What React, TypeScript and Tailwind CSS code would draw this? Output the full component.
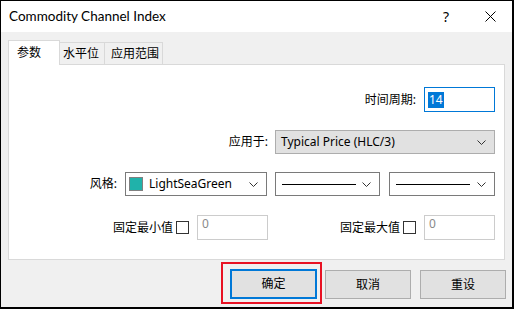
import type { ReactNode } from 'react'

const font = { fontFamily: '"Noto Sans", "Noto Sans CJK SC", sans-serif' }

function Chevron() {
  return (
    <svg width="9" height="5" viewBox="0 0 9 5" className="shrink-0">
      <polyline points="0.5,0.5 4.5,4.5 8.5,0.5" fill="none" stroke="#333" strokeWidth="1" />
    </svg>
  )
}

function Select({ width, className, children }: { width: string; className: string; children: ReactNode }) {
  return (
    <div className={`${width} ${className} h-[24px] flex items-center pr-[8px] border`}>
      <div className="flex-1 flex items-center min-w-0">{children}</div>
      <Chevron />
    </div>
  )
}

function FixedValue({ label }: { label: string }) {
  return (
    <div className="flex items-center">
      <span className="text-[12px] text-black">{label}</span>
      <span className="ml-[3px] w-[13px] h-[13px] border border-[#333] bg-white" />
      <div className="ml-[8px] w-[71px] h-[25px] border border-[#cccccc] pl-[4px] text-[12px] leading-[16px] text-[#8a8a8a]">
        0
      </div>
    </div>
  )
}

export default function App() {
  return (
    <div className="w-[514px] h-[309px] bg-black pt-[1px] pl-[1px] overflow-hidden" style={font}>
      <div className="w-[511px] h-[306px] bg-[#f0f0f0] flex flex-col">
        {/* title bar */}
        <div className="h-[31px] bg-white flex items-center pl-[8px] shrink-0">
          <span className="text-[13.5px] text-black font-[Lato]">Commodity Channel Index</span>
          <span className="ml-auto text-[14px] text-black mr-[36px]">?</span>
          <svg width="11" height="11" viewBox="0 0 11 11" className="mr-[16px]">
            <path d="M0.5 0.5 L10.5 10.5 M10.5 0.5 L0.5 10.5" stroke="#000" strokeWidth="1" />
          </svg>
        </div>

        <div className="pl-[7px] pt-[8px]">
          {/* tabs */}
          <div className="flex items-end h-[24px] text-[12px] text-black">
            <div className="relative z-10 h-[25px] -mb-[1px] w-[52px] bg-white border border-b-0 border-[#d9d9d9] pl-[8px] pt-[3px]">
              参数
            </div>
            <div className="h-[22px] w-[45px] bg-[#f0f0f0] border border-l-0 border-b-0 border-[#d9d9d9] pl-[3px] pt-[2px]">
              水平位
            </div>
            <div className="h-[22px] w-[58px] bg-[#f0f0f0] border border-l-0 border-b-0 border-[#d9d9d9] pl-[6px] pt-[2px]">
              应用范围
            </div>
          </div>

          {/* panel */}
          <div className="w-[497px] h-[196px] bg-white border border-[#d9d9d9] pt-[22px] pr-[9px] text-[12px] text-black">
            <div className="h-[25px] flex items-center justify-end gap-[8px]">
              <span>时间周期:</span>
              <div className="w-[71px] h-[25px] border border-[#0078d7] flex items-center pl-[3px]">
                <span className="bg-[#0078d7] text-white px-[1px] leading-[16px]">14</span>
              </div>
            </div>

            <div className="mt-[18px] h-[24px] flex items-center justify-end gap-[7px]">
              <span>应用于:</span>
              <Select width="w-[220px]" className="bg-[#e1e1e1] border-[#adadad] pl-[5px]">
                <span>Typical Price (HLC/3)</span>
              </Select>
            </div>

            <div className="mt-[18px] h-[24px] flex items-center justify-end">
              <span className="mr-[8px]">风格:</span>
              <Select width="w-[142px]" className="bg-white border-[#7a7a7a] pl-[3px]">
                <span className="w-[14px] h-[14px] bg-[#20b2aa] border border-[#808080]" />
                <span className="ml-[6px]">LightSeaGreen</span>
              </Select>
              <Select width="w-[105px] ml-[8px]" className="bg-white border-[#7a7a7a] pl-[6px]">
                <span className="w-[74px] h-[1px] bg-black" />
              </Select>
              <Select width="w-[106px] ml-[9px]" className="bg-white border-[#7a7a7a] pl-[6px]">
                <span className="w-[74px] h-[1px] bg-black" />
              </Select>
            </div>

            <div className="mt-[19px] h-[25px] flex items-center justify-end gap-[72px]">
              <FixedValue label="固定最小值" />
              <FixedValue label="固定最大值" />
            </div>
          </div>

          {/* buttons */}
          <div className="mt-[9px] flex justify-end pr-[6px] gap-[8px] text-[12px] text-black">
            <div className="relative">
              <button className="w-[87px] h-[30px] bg-[#e1e1e1] border-2 border-[#0078d7]">确定</button>
              <span className="absolute -left-[9px] -top-[7px] -right-[5px] -bottom-[5px] border-2 border-[#e81123] pointer-events-none" />
            </div>
            <button className="w-[86px] h-[29px] mt-[1px] bg-[#e1e1e1] border border-[#adadad]">取消</button>
            <button className="w-[86px] h-[29px] mt-[1px] ml-[1px] bg-[#e1e1e1] border border-[#adadad]">重设</button>
          </div>
        </div>
      </div>
    </div>
  )
}
